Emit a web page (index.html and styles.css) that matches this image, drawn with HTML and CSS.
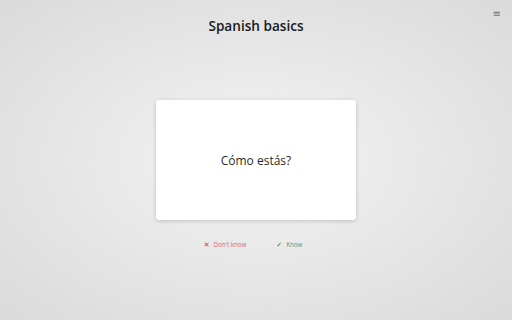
FILE: index.html
```html
<!DOCTYPE html>
<html lang="en">
<head>
<meta charset="utf-8">
<title>Spanish basics</title>
<link rel="stylesheet" href="styles.css">
</head>
<body>
<div class="page">
  <header class="header">
    <h1 class="title">Spanish basics</h1>
    <button class="menu" aria-label="Menu">≡</button>
  </header>
  <main class="main">
    <div class="card">
      <p class="card-text">Cómo estás?</p>
    </div>
    <div class="actions">
      <button class="action action-no"><span class="icon">✕</span>Don't know</button>
      <button class="action action-yes"><span class="icon">✓</span>Know</button>
    </div>
  </main>
</div>
</body>
</html>
```
FILE: styles.css
```css
html, body {
  margin: 0;
  padding: 0;
  height: 100%;
}
body {
  font-family: "Open Sans", "Noto Sans", sans-serif;
  background: radial-gradient(ellipse at 50% 50%, #f3f3f3 0%, #e8e8e8 45%, #dadada 100%);
  color: #222;
}
.page {
  height: 320px;
  display: flex;
  flex-direction: column;
  position: relative;
}
.header {
  height: 50px;
  display: flex;
  align-items: center;
  justify-content: center;
}
.title {
  margin: 0;
  font-size: 13.6px;
  font-weight: 600;
  color: #1a1a1a;
}
.menu {
  position: absolute;
  top: 9px;
  right: 11px;
  border: 0;
  background: none;
  padding: 0;
  font-size: 10px;
  color: #777;
  line-height: 1;
  font-family: "DejaVu Sans", sans-serif;
}
.main {
  display: flex;
  flex-direction: column;
  align-items: center;
  padding-top: 50px;
}
.card {
  width: 200px;
  height: 120px;
  background: #fff;
  border-radius: 3px;
  box-shadow: 0 1px 4px rgba(0,0,0,0.18);
  display: flex;
  align-items: center;
  justify-content: center;
}
.card-text {
  margin: 0;
  font-size: 12px;
  color: #2a2a2a;
}
.actions {
  display: flex;
  gap: 30px;
  margin-top: 20px;
  padding-right: 6px;
}
.action {
  border: 0;
  background: none;
  padding: 0;
  font-family: "Open Sans", sans-serif;
  font-size: 6.2px;
  display: flex;
  align-items: center;
  gap: 4px;
}
.icon {
  font-family: "DejaVu Sans", sans-serif;
  font-size: 7px;
}
.action-no { color: #d46a7c; }
.action-no .icon { color: #c0392b; }
.action-yes { color: #4a9a8a; }
.action-yes .icon { color: #1f8a5a; }
```
